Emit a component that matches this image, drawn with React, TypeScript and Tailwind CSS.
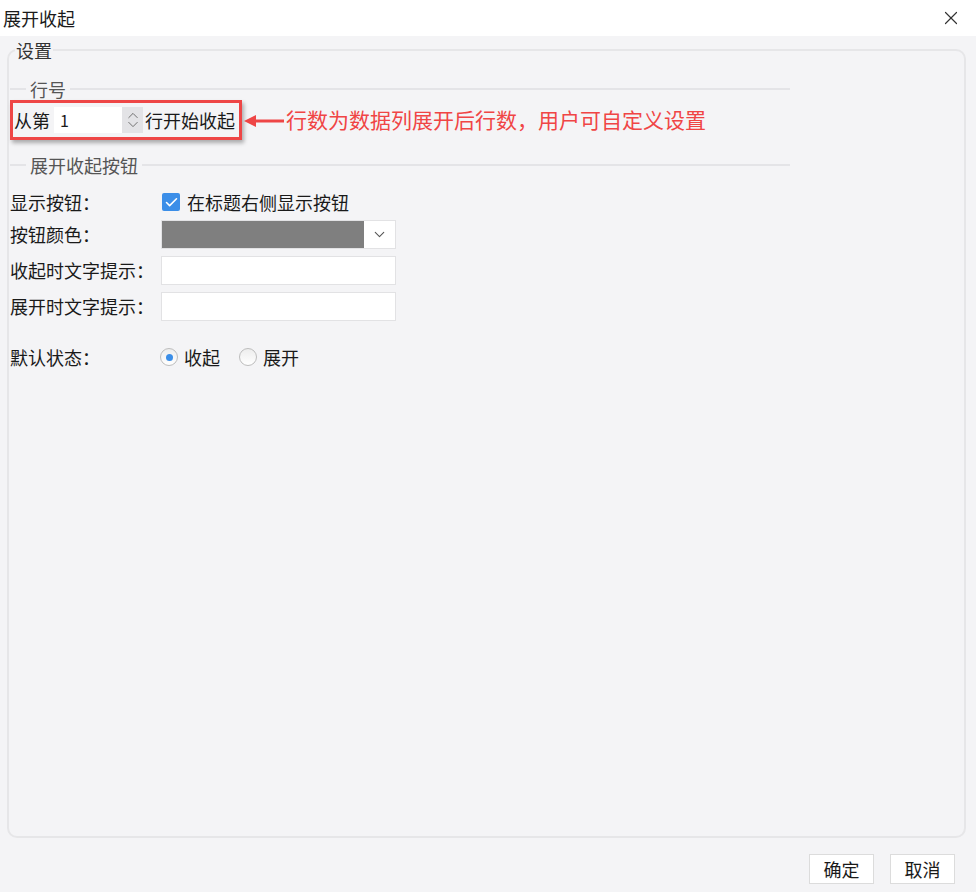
import { X, ChevronDown, ChevronUp, Check } from "lucide-react";

const font = { fontFamily: '"Noto Sans CJK SC", "Noto Sans", sans-serif' };

function Divider({ label }: { label: string }) {
  return (
    <div className="flex items-center h-[22px] w-[780px]">
      <div className="w-[16px] h-[2px] bg-[#e4e4e7]" />
      <span className="px-[4px] text-[18px] leading-[22px] text-[#555]">{label}</span>
      <div className="flex-1 h-[2px] bg-[#e4e4e7]" />
    </div>
  );
}

function TextBox() {
  return <div className="w-[235px] h-[29px] bg-white border border-[#e2e2e4]" />;
}

function Radio({ checked, label }: { checked?: boolean; label: string }) {
  return (
    <div className="flex items-center gap-[6px]">
      <div className="w-[18px] h-[18px] rounded-full border border-[#bdbdbd] bg-gradient-to-b from-[#ededed] to-white flex items-center justify-center">
        {checked && <div className="w-[7px] h-[7px] rounded-full bg-[#3b8ee8]" />}
      </div>
      <span>{label}</span>
    </div>
  );
}

export default function App() {
  return (
    <div className="w-[976px] h-[892px] flex flex-col bg-[#f4f4f6] text-[18px] text-[#1a1a1a]" style={font}>
      <div className="h-[36px] bg-white flex items-center justify-between pl-[3px] pr-[14px]">
        <span className="text-[18px]">展开收起</span>
        <X className="size-[22px] text-[#333]" strokeWidth={1.3} />
      </div>

      <div className="flex-1 flex flex-col pl-[7px] pr-[10px] pt-[4px]">
        <fieldset className="h-[798px] border-2 border-[#e6e6e8] rounded-[10px] pl-[1px]">
          <legend className="ml-[5px] px-[1px] text-[18px] leading-[20px] text-[#333]">设置</legend>

          <div className="mt-[18px]">
            <Divider label="行号" />
          </div>

          <div className="flex items-center">
            <div className="w-[232px] h-[40px] border-[3px] border-[#ee4646] shadow-[2px_3px_4px_rgba(0,0,0,0.3)] flex items-center pl-[1px]">
              <span>从第</span>
              <div className="ml-[4px] flex h-[26px]">
                <div className="w-[68px] bg-white flex items-center pl-[6px] text-[16px]">1</div>
                <div className="w-[21px] bg-[#e3e3e6] flex flex-col items-center justify-center text-[#666]">
                  <ChevronUp className="size-[20px] -mb-[4px]" strokeWidth={1.3} />
                  <ChevronDown className="size-[20px] -mt-[4px]" strokeWidth={1.3} />
                </div>
              </div>
              <span className="ml-[2px]">行开始收起</span>
            </div>
            <svg width="40" height="12" viewBox="0 0 40 12" className="ml-[2px] mt-[1px]">
              <line x1="8" y1="6" x2="40" y2="6" stroke="#ee4646" strokeWidth="3" />
              <polygon points="0,6 12,0 12,12" fill="#ee4646" />
            </svg>
            <span className="ml-[2px] text-[21px] text-[#f04545]">行数为数据列展开后行数，用户可自定义设置</span>
          </div>

          <div className="mt-[14px]">
            <Divider label="展开收起按钮" />
          </div>

          <div className="grid grid-cols-[151px_1fr] items-center">
            <span className="mt-[11px]">显示按钮：</span>
            <div className="mt-[11px] h-[30px] flex items-center gap-[7px] pl-[1px]">
              <div className="w-[18px] h-[18px] rounded-[2px] bg-[#3b8ee8] flex items-center justify-center">
                <Check className="size-[15px] text-white" strokeWidth={2.5} />
              </div>
              <span>在标题右侧显示按钮</span>
            </div>

            <span className="mt-[3px]">按钮颜色：</span>
            <div className="mt-[3px] w-[235px] h-[29px] flex border border-[#e2e2e4] bg-white">
              <div className="w-[202px] bg-[#7f7f7f]" />
              <div className="flex-1 flex items-center justify-center text-[#555]">
                <ChevronDown className="size-[17px]" strokeWidth={1.5} />
              </div>
            </div>

            <span className="mt-[7px]">收起时文字提示：</span>
            <div className="mt-[7px]"><TextBox /></div>

            <span className="mt-[7px]">展开时文字提示：</span>
            <div className="mt-[7px]"><TextBox /></div>

            <span className="mt-[22px] h-[28px] flex items-center">默认状态：</span>
            <div className="mt-[22px] h-[28px] flex items-center gap-[19px] -ml-[1px]">
              <Radio checked label="收起" />
              <Radio label="展开" />
            </div>
          </div>
        </fieldset>

        <div className="flex justify-end gap-[16px] mt-[16px] pr-[11px]">
          <button className="w-[65px] h-[30px] bg-white border border-[#dcdcdc] text-[18px]">确定</button>
          <button className="w-[65px] h-[30px] bg-white border border-[#dcdcdc] text-[18px]">取消</button>
        </div>
      </div>
    </div>
  );
}
